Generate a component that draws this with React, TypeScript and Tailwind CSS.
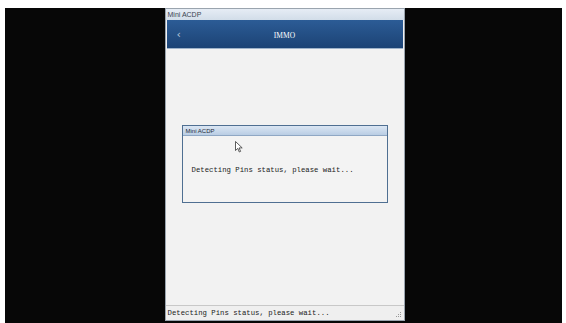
import React from "react";

export default function App() {
  return (
    <div className="w-[566px] h-[323px] bg-white pt-[8px] pl-[5px] pr-[4px] overflow-hidden">
      <div className="h-[315px] bg-[#070707] flex justify-center pl-[2px]">
        <div className="w-[240px] h-[313px] bg-[#f1f1f1] border border-[#9aa4ae] flex flex-col">
          {/* title bar */}
          <div className="h-[11px] bg-gradient-to-b from-[#e6edf5] to-[#d2dde9] flex items-center pl-[2px]">
            <span className="text-[7px] leading-none text-[#3a4450]" style={{ fontFamily: '"Liberation Sans", Arial, sans-serif' }}>Mini ACDP</span>
          </div>
          {/* blue header */}
          <div className="mx-[1px] h-[29px] bg-gradient-to-b from-[#2c5c96] to-[#1c4375] border-b border-[#9fb3c9] flex items-center relative">
            <span className="absolute left-[10px] top-[9px] text-[11px] text-[#b8c6d8] leading-none" style={{ fontFamily: '"DejaVu Sans", sans-serif' }}>‹</span>
            <span className="flex-1 text-center text-[7.5px] text-white leading-none pt-[3px]" style={{ fontFamily: '"Liberation Serif", serif' }}>IMMO</span>
          </div>
          {/* body */}
          <div className="flex-1 bg-[#f2f2f2] pt-[76px] pl-[16px] relative">
            <div className="w-[206px] h-[78px] border border-[#4f6f92] bg-[#f3f3f3] flex flex-col">
              <div className="h-[10px] bg-gradient-to-b from-[#dbe6f3] to-[#b9cde4] border-b border-[#8fa7c4] flex items-center pl-[3px]">
                <span className="text-[6px] leading-none text-[#1e2a36]" style={{ fontFamily: '"Liberation Sans", Arial, sans-serif' }}>Mini ACDP</span>
              </div>
              <div className="pl-[9px] pt-[18px]">
                <span className="text-[7.3px] leading-none text-[#222]" style={{ fontFamily: '"Liberation Mono", "Courier New", monospace' }}>Detecting Pins status, please wait...</span>
              </div>
            </div>
            <svg className="absolute left-[69px] top-[92px]" width="8" height="12" viewBox="0 0 8 12">
              <path d="M0.5 0.5 L0.5 9.5 L2.8 7.4 L4.3 11 L5.6 10.4 L4.1 6.9 L7.2 6.9 Z" fill="#fff" stroke="#333" strokeWidth="0.8" />
            </svg>
          </div>
          {/* status bar */}
          <div className="h-[15px] border-t border-[#c8c8c8] bg-[#efefef] flex items-center pl-[2px] relative">
            <span className="text-[7.3px] leading-none text-[#222] pt-[1px]" style={{ fontFamily: '"Liberation Mono", "Courier New", monospace' }}>Detecting Pins status, please wait...</span>
            <svg className="absolute right-[2px] bottom-[2px]" width="6" height="6" viewBox="0 0 6 6">
              <rect x="4" y="0" width="1" height="1" fill="#999" />
              <rect x="2" y="2" width="1" height="1" fill="#999" />
              <rect x="4" y="2" width="1" height="1" fill="#999" />
              <rect x="0" y="4" width="1" height="1" fill="#999" />
              <rect x="2" y="4" width="1" height="1" fill="#999" />
              <rect x="4" y="4" width="1" height="1" fill="#999" />
            </svg>
          </div>
        </div>
      </div>
    </div>
  );
}
